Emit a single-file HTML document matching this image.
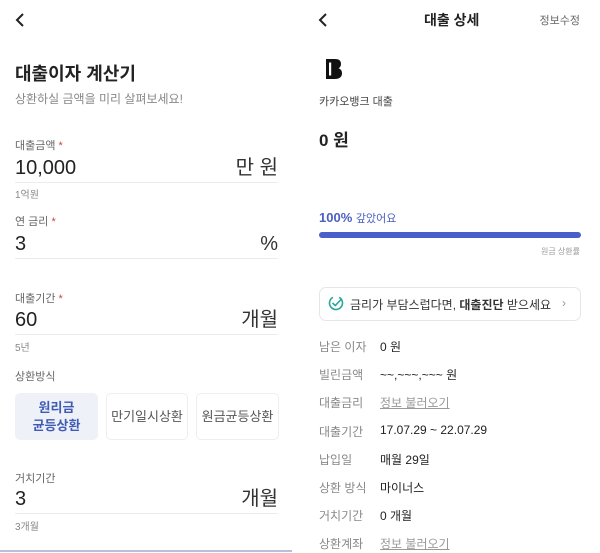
<html><head><style>
body{margin:0;width:600px;height:553px;background:#fff;font-family:"Liberation Sans","Noto Sans CJK KR",sans-serif;position:relative;overflow:hidden;color:#222}
.a{position:absolute;white-space:nowrap}
.l{position:absolute;height:1px;background:#ececec}
.row{position:absolute;left:15px;width:263px;display:flex;justify-content:space-between;align-items:baseline;font-size:20px;line-height:24px}
.row span:last-child{color:#333}
.btn{position:absolute;top:393px;height:45px;border:1px solid #eee;border-radius:5px;display:flex;align-items:center;justify-content:center;font-size:13px;color:#555;text-align:center;line-height:18px}
.lab{position:absolute;left:319px;font-size:12px;color:#888}
.val{position:absolute;left:380px;font-size:12px;color:#222}
.lk{color:#999;text-decoration:underline}
</style></head><body>
<svg class="a" style="left:13px;top:12px" width="14" height="16"><path d="M10 2 L4 8 L10 14" stroke="#222" stroke-width="2" fill="none"/></svg>
<div class="a" style="left:15px;top:60px;font-size:18px;font-weight:bold">대출이자 계산기</div>
<div class="a" style="left:15px;top:90px;font-size:12px;color:#888">상환하실 금액을 미리 살펴보세요!</div>
<div class="a" style="left:15px;top:137px;font-size:11px;color:#666">대출금액 <span style="color:#c44">*</span></div>
<div class="row" style="top:156px"><span>10,000</span><span>만 원</span></div>
<div class="l" style="left:15px;top:182px;width:263px"></div>
<div class="a" style="left:15px;top:186px;font-size:10px;color:#888">1억원</div>
<div class="a" style="left:15px;top:213px;font-size:11px;color:#666">연 금리 <span style="color:#c44">*</span></div>
<div class="row" style="top:232px"><span>3</span><span>%</span></div>
<div class="l" style="left:15px;top:258px;width:263px"></div>
<div class="a" style="left:15px;top:290px;font-size:11px;color:#666">대출기간 <span style="color:#c44">*</span></div>
<div class="row" style="top:308px"><span>60</span><span>개월</span></div>
<div class="l" style="left:15px;top:334px;width:263px"></div>
<div class="a" style="left:15px;top:339px;font-size:10px;color:#888">5년</div>
<div class="a" style="left:15px;top:368px;font-size:11px;color:#666">상환방식</div>
<div class="btn" style="left:15px;width:81px;background:#eef1f8;border-color:#eef1f8;color:#3f5bb5;font-weight:bold">원리금<br>균등상환</div>
<div class="btn" style="left:106px;width:80px">만기일시상환</div>
<div class="btn" style="left:196px;width:81px">원금균등상환</div>
<div class="a" style="left:15px;top:470px;font-size:11px;color:#666">거치기간</div>
<div class="row" style="top:487px"><span>3</span><span>개월</span></div>
<div class="l" style="left:15px;top:513px;width:263px"></div>
<div class="a" style="left:15px;top:518px;font-size:10px;color:#888">3개월</div>
<div class="l" style="left:0;top:550px;width:292px;height:2px;background:#b8c0d8"></div>

<svg class="a" style="left:316px;top:12px" width="14" height="16"><path d="M10 2 L4 8 L10 14" stroke="#222" stroke-width="2" fill="none"/></svg>
<div class="a" style="left:424px;top:10px;font-size:14px;font-weight:bold">대출 상세</div>
<div class="a" style="right:20px;top:12px;font-size:11px;color:#666">정보수정</div>
<svg class="a" style="left:326px;top:59px" width="16" height="20"><path d="M0 0 H9 C13.5 0 15 2 15 5 C15 7.2 14 8.5 12.5 9.3 C14.8 10 16 11.8 16 14.3 C16 18 13.5 20 9 20 H0 Z" fill="#111"/><rect x="3" y="3.5" width="2.2" height="13" fill="#fff"/></svg>
<div class="a" style="left:319px;top:93px;font-size:11px;color:#444">카카오뱅크 대출</div>
<div class="a" style="left:319px;top:126px;font-size:17px;font-weight:bold">0 원</div>
<div class="a" style="left:319px;top:210px;font-size:13px;color:#4a5fc1"><b>100%</b> <span style="font-size:11px">갚았어요</span></div>
<div class="a" style="left:319px;top:232px;width:262px;height:6px;border-radius:3px;background:#4a5fc9"></div>
<div class="a" style="right:20px;top:246px;font-size:8px;color:#999">원금 상환률</div>
<div class="a" style="left:319px;top:287px;width:260px;height:32px;border:1px solid #e6e6e6;border-radius:7px"></div>
<svg class="a" style="left:328px;top:295px" width="16" height="16"><circle cx="8" cy="8" r="6.5" stroke="#2aa79a" stroke-width="1.6" fill="none" stroke-dasharray="34 7" transform="rotate(-60 8 8)"/><path d="M4.5 8 L7.3 10.5 L13 4.5" stroke="#2aa79a" stroke-width="1.6" fill="none"/></svg>
<div class="a" style="left:350px;top:296px;font-size:12px;color:#333">금리가 부담스럽다면, <b>대출진단</b> 받으세요</div>
<div class="a" style="left:562px;top:296px;font-size:12px;color:#999">›</div>
<div class="lab" style="top:338px">남은 이자</div><div class="val" style="top:338px">0 원</div>
<div class="lab" style="top:366px">빌린금액</div><div class="val" style="top:366px">~~,~~~,~~~ 원</div>
<div class="lab" style="top:394px">대출금리</div><div class="val lk" style="top:394px">정보 불러오기</div>
<div class="lab" style="top:423px">대출기간</div><div class="val" style="top:423px">17.07.29 ~ 22.07.29</div>
<div class="lab" style="top:451px">납입일</div><div class="val" style="top:451px">매월 29일</div>
<div class="lab" style="top:479px">상환 방식</div><div class="val" style="top:479px">마이너스</div>
<div class="lab" style="top:507px">거치기간</div><div class="val" style="top:507px">0 개월</div>
<div class="lab" style="top:535px">상환계좌</div><div class="val lk" style="top:535px">정보 불러오기</div>
</body></html>
